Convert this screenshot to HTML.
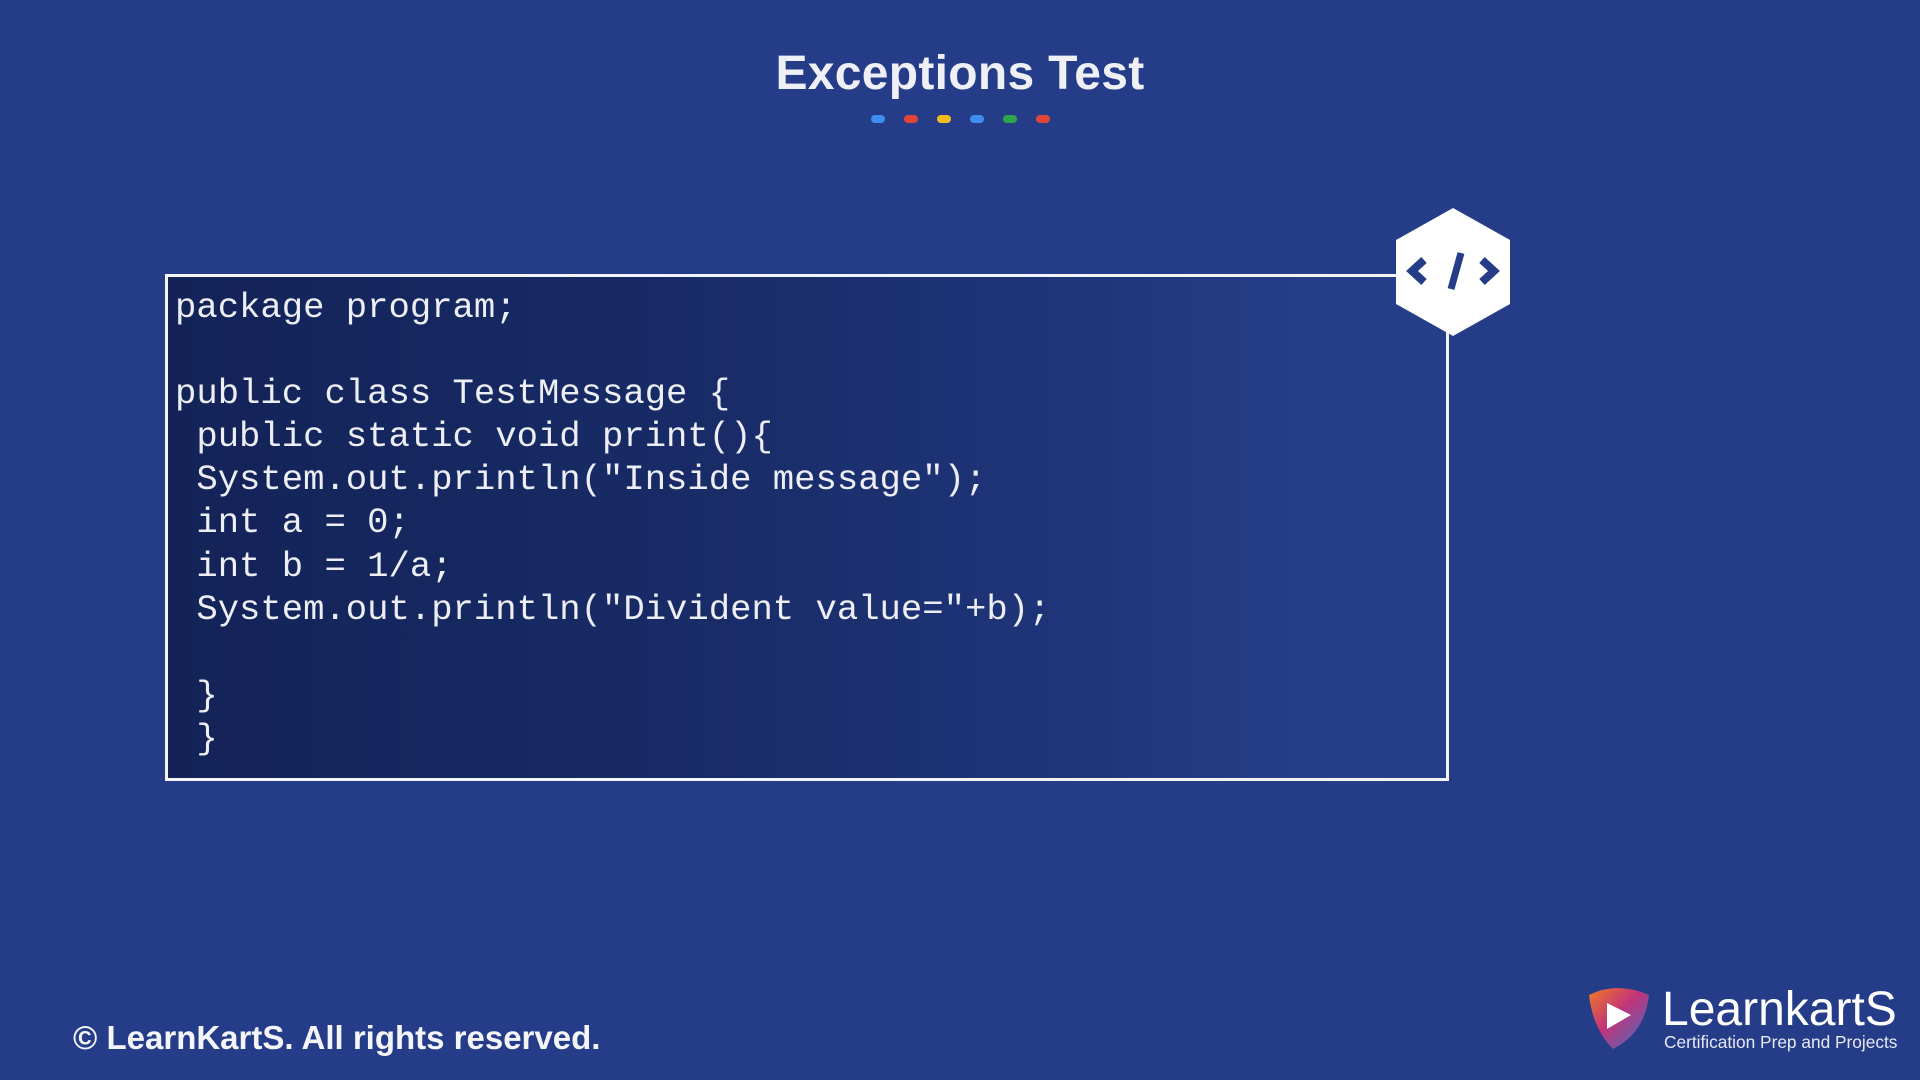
<!DOCTYPE html>
<html><head><meta charset="utf-8"><style>
*{margin:0;padding:0;box-sizing:border-box}
body{width:1920px;height:1080px;background:#253d89;position:relative;overflow:hidden;font-family:"Liberation Sans",sans-serif}
.title{position:absolute;left:0;width:1920px;top:46px;text-align:center;color:#eef0f5;font-weight:bold;font-size:48px;letter-spacing:0.3px}
.dot{position:absolute;top:115px;width:14px;height:8px;border-radius:4px}
.box{position:absolute;left:165px;top:274px;width:1284px;height:507px;border:3px solid #f2f4f8;background:linear-gradient(90deg,#132358 0%,#182b66 40%,#1f3579 70%,#273f8b 92%,#263e8a 100%)}
pre{position:absolute;left:175px;top:286px;font-family:"Liberation Mono","Courier New",monospace;font-size:35.6px;line-height:43.1px;color:#eceef4}
.foot{position:absolute;left:73px;top:1019px;color:#f4f5f8;font-weight:bold;font-size:33px;letter-spacing:0px}
.lt{position:absolute;left:1662px;top:982px;color:#fff;font-size:48px}
.ls{position:absolute;left:1664px;top:1032px;color:#e6e9f2;font-size:17.3px}
</style></head><body>
<div class="title">Exceptions Test</div>
<div class="dot" style="left:871px;background:#3e8ef0"></div>
<div class="dot" style="left:904px;background:#e0443a"></div>
<div class="dot" style="left:937px;background:#f2bd1d"></div>
<div class="dot" style="left:970px;background:#3e8ef0"></div>
<div class="dot" style="left:1003px;background:#2ea54a"></div>
<div class="dot" style="left:1036px;background:#e0443a"></div>
<div class="box"></div>
<pre>package program;

public class TestMessage {
 public static void print(){
 System.out.println("Inside message");
 int a = 0;
 int b = 1/a;
 System.out.println("Divident value="+b);

 }
 }</pre>
<svg style="position:absolute;left:1394px;top:207px" width="118" height="130" viewBox="0 0 118 130">
<polygon points="59,1 116,33 116,97 59,129 2,97 2,33" fill="#fff"/>
<path d="M30,53 L18,64 L30,75" stroke="#253d89" stroke-width="8" fill="none"/>
<path d="M88,53 L100,64 L88,75" stroke="#253d89" stroke-width="8" fill="none"/>
<path d="M67,46 L57,82" stroke="#253d89" stroke-width="7" fill="none"/>
</svg>
<div class="foot">© LearnKartS. All rights reserved.</div>
<svg style="position:absolute;left:1587px;top:985px" width="64" height="66" viewBox="0 0 64 66">
<defs><linearGradient id="g" x1="0" y1="0" x2="1" y2="1"><stop offset="0" stop-color="#f07a22"/><stop offset="0.45" stop-color="#c2337a"/><stop offset="1" stop-color="#3a72c4"/></linearGradient></defs>
<path d="M2,10 Q30,-4 62,10 Q58,48 26,64 Q6,44 2,10Z" fill="url(#g)"/>
<path d="M20,18 L44,30 L20,44Z" fill="#fff"/>
</svg>
<div class="lt">LearnkartS</div>
<div class="ls">Certification Prep and Projects</div>
</body></html>
